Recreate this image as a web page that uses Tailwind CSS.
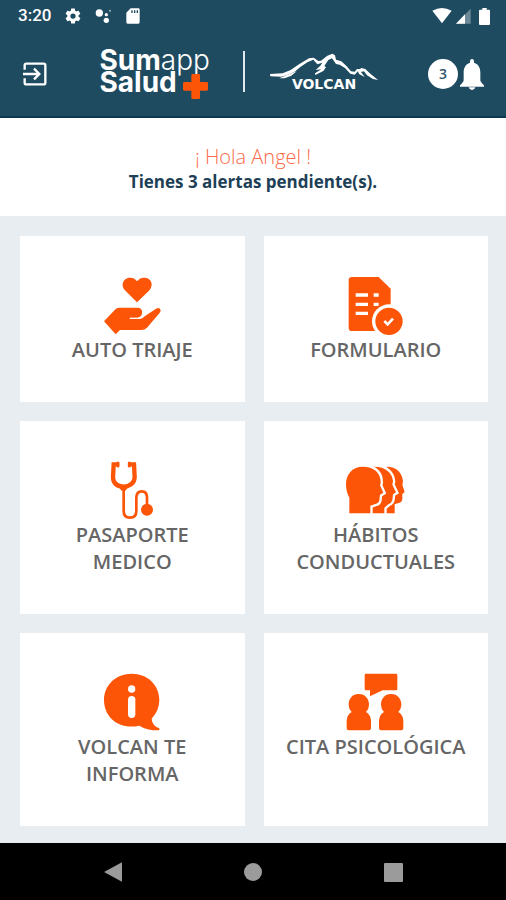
<!DOCTYPE html>
<html lang="es">
<head>
<meta charset="utf-8">
<meta name="viewport" content="width=device-width, initial-scale=1">
<title>Sumapp Salud</title>
<script src="https://cdn.jsdelivr.net/npm/@tailwindcss/browser@4"></script>
</head>
<body class="flex min-h-screen flex-col bg-[#e8edf1] font-['Open_Sans',sans-serif]">

<header class="border-b-2 border-[#0c3a54] bg-[#1f4b61] text-white">
  <!-- Status bar -->
  <div class="flex h-8 items-center justify-between pr-4 pl-[18px]">
    <div class="flex items-center gap-[13px]">
      <span class="font-[Roboto,sans-serif] text-[17px] font-medium">3:20</span>
      <svg class="size-[18px]" viewBox="0 0 24 24" fill="currentColor" aria-hidden="true"><path d="M19.4 13c0-.3.1-.6.1-1s0-.7-.1-1l2.100-1.600c.2-.2.3-.4.100-.7l-2-3.400c-.1-.2-.4-.3-.6-.2l-2.500 1c-.5-.4-1.100-.7-1.700-1L14.500 2.400c0-.2-.2-.4-.5-.4h-4c-.3 0-.5.2-.5.4l-.4 2.700c-.6.2-1.100.6-1.700 1l-2.500-1c-.2-.1-.5 0-.6.2l-2 3.400c-.1.2-.1.5.1.7L4.500 11c0 .3-.1.600-.1 1s0 .7.1 1l-2.100 1.600c-.2.200-.2.400-.1.700l2 3.400c.1.200.4.300.6.200l2.500-1c.5.400 1.100.7 1.700 1l.4 2.700c0 .2.200.4.5.4h4c.3 0 .5-.2.500-.4l.4-2.700c.6-.2 1.100-.6 1.700-1l2.500 1c.2.100.5 0 .6-.2l2-3.400c.1-.2.1-.5-.1-.7zM12 15.500a3.500 3.500 0 1 1 0-7 3.500 3.500 0 0 1 0 7z"/></svg>
      <svg class="h-4 w-[18px]" viewBox="0 0 54 48" fill="currentColor" aria-hidden="true"><circle cx="13" cy="15" r="11"/><circle cx="34" cy="20" r="5"/><circle cx="34" cy="37" r="8"/><circle cx="45" cy="8" r="3" opacity=".6"/></svg>
      <svg class="h-4 w-[14px]" viewBox="0 0 42 48" fill="currentColor" aria-hidden="true"><path fill-rule="evenodd" d="M14 1h23q4 0 4 4v38q0 4-4 4H5q-4 0-4-4V14zM16 7v8h4V7zm8 0v8h4V7zm8 0v8h4V7z"/></svg>
    </div>
    <div class="flex items-center gap-1">
      <svg class="h-4 w-5" viewBox="0 0 60 48" fill="currentColor" aria-hidden="true"><path d="M1 8Q30-8 59 8L30 46z"/></svg>
      <svg class="h-4 w-[15px]" viewBox="0 0 45 48" fill="currentColor" aria-hidden="true"><path opacity=".35" d="M44 2v45H0z"/><path d="M27 19v28H0z"/></svg>
      <svg class="ml-1 h-[17px] w-[11px]" viewBox="0 0 33 51" fill="currentColor" aria-hidden="true"><path d="M10 0h13v5h7q3 0 3 3v40q0 3-3 3H3q-3 0-3-3V8q0-3 3-3h7z"/></svg>
    </div>
  </div>

  <!-- App bar -->
  <div class="flex h-[84px] items-center justify-between pr-[22px] pl-5">
    <button type="button" aria-label="Salir" class="flex w-[30px] justify-center">
      <svg class="size-6" viewBox="0 0 72 72" fill="none" stroke="currentColor" stroke-width="7" aria-hidden="true"><path d="M5 23V10q0-5 5-5h52q5 0 5 5v52q0 5-5 5H10q-5 0-5-5V49M0 36h48M33 20l16 16-16 16"/></svg>
    </button>

    <div class="mb-[6px] flex items-center gap-[25px]">
      <div class="relative w-[118px] font-[Inter,sans-serif] text-[28px] leading-[22px] font-bold">
        <div class="whitespace-nowrap">Sum<span class="font-light">app</span></div>
        <div>Salud</div>
        <svg class="absolute right-[10px] -bottom-[6px] size-[25px]" viewBox="0 0 75 75" fill="#fd5507" aria-hidden="true"><path d="M29 0h18q4 0 4 4v20h20q4 0 4 4v18q0 4-4 4H51v21q0 4-4 4H29q-4 0-4-4V50H4q-4 0-4-4V28q0-4 4-4h21V4q0-4 4-4z"/></svg>
      </div>
      <div class="h-[41px] w-[2px] bg-[#dfe8ec]"></div>
      <svg class="h-[37px] w-[109px] overflow-visible" viewBox="48 156 327 111" fill="currentColor" role="img" aria-label="Volcan">
        <path d="M48 219L86 217 110 207 135 190 165 172 179 170 193 180 201 179 220 164 235 158 243 163 246 176 262 181 278 196 291 211 302 212 309 204 318 204 322 201 334 204 349 218 372 237 357 234 339 223 330 211 321 213 332 228 315 219 312 211 302 221 289 218 273 201 257 191 246 189 234 172 223 177 211 195 216 199 208 210 184 222 183 217 202 205 185 207 199 194 205 185 190 190 178 176 160 184 140 197 121 213 97 223 82 227 49 226z"/>
        <path d="M76 232Q98 222 128 211L112 224 92 232z"/>
        <text x="210" y="265" text-anchor="middle" font-family="DejaVu Sans, sans-serif" font-weight="700" font-size="42">VOLCAN</text>
      </svg>
    </div>

    <button type="button" aria-label="3 notificaciones" class="flex items-center gap-[2px]">
      <span class="flex size-[30px] items-center justify-center rounded-full bg-white text-sm font-semibold text-[#33566a]">3</span>
      <svg class="h-[31px] w-6" viewBox="0 0 72 93" fill="currentColor" aria-hidden="true"><path d="M36 0q6 0 6 6v5C56 15 61 28 61 41v23q0 5 11 15v4H0v-4q11-10 11-15V41C11 28 16 15 30 11V6q0-6 6-6zM26 85h20q-2 8-10 8t-10-8z"/></svg>
    </button>
  </div>
</header>

<section class="bg-white pt-[26px] pb-[22px] text-center leading-[25px]">
  <p class="text-[20px] font-light text-[#fb6a48]">¡ Hola Angel !</p>
  <p class="text-[17px] font-bold text-[#1d4056]">Tienes 3 alertas pendiente(s).</p>
</section>

<main class="grid flex-1 grid-cols-2 content-start gap-[19px] pt-5 pr-[18px] pb-[17px] pl-5 text-center text-[20px] leading-[27px] font-semibold text-[#666]">
  <a href="#triaje" class="flex flex-col items-center bg-white px-6 pt-10 pb-[39px]">
    <svg class="size-[60px]" viewBox="126 33 180 180" fill="#fd5507" aria-hidden="true">
      <path d="M231 112L197 78C178 58 193 37 211 38Q225 39 231 49 238 39 252 38C272 37 284 58 267 77z"/>
      <path d="M132 169L167 132Q172 128 180 128H236Q248 131 246 145 245 156 233 158H210V162H240Q249 161 254 154L288 131Q299 125 302 136 302 141 298 145L261 188Q254 195 244 195H180L167 208z"/>
      <path d="M209 160H236Q243 158 245 152" fill="none" stroke="#fff" stroke-width="3"/>
    </svg>
    <span>AUTO TRIAJE</span>
  </a>

  <a href="#formulario" class="flex flex-col items-center bg-white px-6 pt-10 pb-[39px]">
    <svg class="size-[60px]" viewBox="138 33 180 180" fill="#fd5507" aria-hidden="true">
      <path d="M156 36H236L272 71V190Q272 198 262 198H156Q146 198 146 188V46Q146 36 156 36z"/>
      <path d="M167 85h37v10h-37zm0 28h37v10h-37zm0 27h37v10h-37zM221 85h15v10h-15zm0 28h15v10h-15z" fill="#fff"/>
      <circle cx="267" cy="169" r="51" fill="#fff"/>
      <circle cx="267" cy="169" r="41"/>
      <path d="M253 168L263 178 279 161" fill="none" stroke="#fff" stroke-width="8"/>
    </svg>
    <span>FORMULARIO</span>
  </a>

  <a href="#pasaporte" class="flex flex-col items-center bg-white px-6 pt-10 pb-[39px]">
    <svg class="size-[60px]" viewBox="126 33 180 180" fill="none" stroke="#fd5507" aria-hidden="true">
      <path d="M175 43H161L159 82Q160 108 190 110 222 108 224 82L222 43H207" stroke-width="13"/>
      <path d="M174 39v9M208 39v9" stroke-width="9" stroke-linecap="round"/>
      <path d="M172 107H209L196 122H185z" fill="#fd5507" stroke="none"/>
      <path d="M191 112V183Q191 203 210 203 229 203 229 183V142Q230 124 245 124 261 124 261 142V165" stroke-width="8"/>
      <circle cx="261" cy="179" r="18" fill="#fd5507" stroke="none"/>
    </svg>
    <span>PASAPORTE MEDICO</span>
  </a>

  <a href="#habitos" class="flex flex-col items-center bg-white px-6 pt-10 pb-[39px]">
    <svg class="size-[60px]" viewBox="168 33 180 180" fill="#fd5507" aria-hidden="true">
      <path d="M290 50C319 50 337 67 339 95L337 104 344 126 337 132V147Q336 158 326 159L314 163V190H284z"/>
      <path d="M250 50C286 49 307 68 309 94L307 104 318 127 309 133 307 150Q305 159 296 162L283 173V190H240z" stroke="#fff" stroke-width="14" paint-order="stroke"/>
      <path d="M218 50C253 50 273 69 272 98L270 106 280 128 270 134 268 151Q266 161 256 162L241 167V190H178V143C172 132 168 121 168 103 168 72 188 50 218 50z" stroke="#fff" stroke-width="14" paint-order="stroke"/>
    </svg>
    <span>HÁBITOS CONDUCTUALES</span>
  </a>

  <a href="#informa" class="flex flex-col items-center bg-white px-6 pt-10 pb-[39px]">
    <svg class="size-[60px]" viewBox="126 36 180 180" fill="#fd5507" aria-hidden="true">
      <path d="M215 38C263 38 298 72 298 117Q298 148 275 173 276 193 298 202V208Q262 209 238 194C178 207 132 170 132 117 132 72 168 38 215 38z"/>
      <circle cx="215" cy="84" r="11" fill="#fff"/>
      <rect x="204" y="105" width="22" height="66" rx="11" fill="#fff"/>
    </svg>
    <span>VOLCAN TE INFORMA</span>
  </a>

  <a href="#cita" class="flex flex-col items-center bg-white px-4 pt-10 pb-[39px]">
    <svg class="size-[60px]" viewBox="198 36 180 180" fill="#fd5507" aria-hidden="true">
      <path d="M258 38H348Q352 38 352 42V83Q352 88 348 88H308L270 106V88H258Q254 88 254 83V42Q254 38 258 38z"/>
      <path id="person" d="M236 99C256 99 267 114 267 130Q267 144 258 153 272 161 273 180V202Q273 208 267 208H206Q200 208 200 202V180Q201 161 215 153 206 144 206 130C206 114 217 99 236 99z"/>
      <use href="#person" x="97"/>
    </svg>
    <span class="whitespace-nowrap">CITA PSICOLÓGICA</span>
  </a>
</main>

<nav class="flex h-[58px] items-center justify-center gap-[116px] bg-black text-[#9b9b9b]" aria-label="Sistema">
  <button type="button" aria-label="Atrás" class="flex size-6 items-center justify-center"><svg class="h-5 w-[18px]" viewBox="0 0 54 60" fill="currentColor" aria-hidden="true"><path d="M54 1v58L0 30z"/></svg></button>
  <button type="button" aria-label="Inicio" class="flex size-6 items-center justify-center"><span class="size-[18px] rounded-full bg-current"></span></button>
  <button type="button" aria-label="Recientes" class="flex size-6 items-center justify-center"><span class="size-[19px] rounded-[1px] bg-current"></span></button>
</nav>
</body>
</html>
